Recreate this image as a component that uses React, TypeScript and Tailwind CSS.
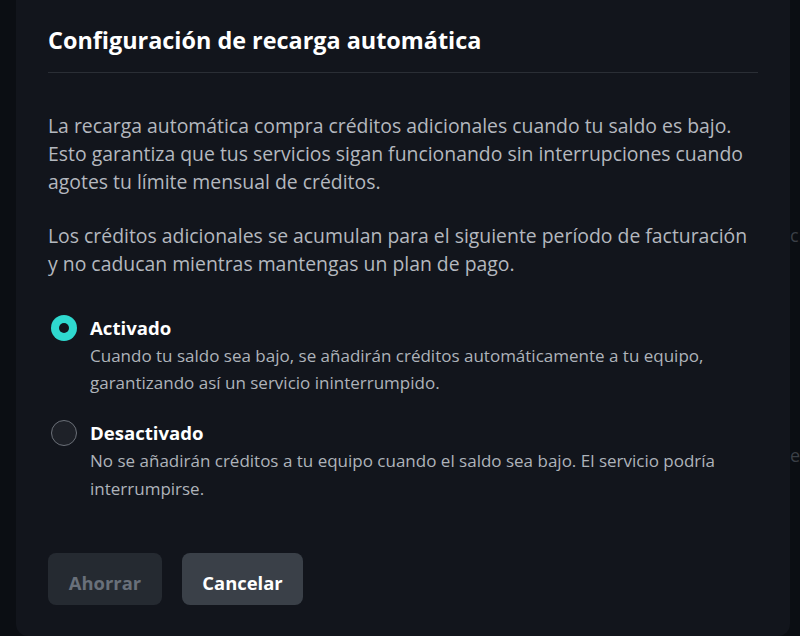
import React from "react";

export default function App() {
  return (
    <div className="relative w-[800px] h-[636px] overflow-hidden bg-[#0b0e13]" style={{ fontFamily: '"Open Sans", "Noto Sans", sans-serif' }}>
      <div className="absolute right-0 top-0 h-full w-[10px] text-[18px] text-[#3a3f46]">
        <div className="absolute top-[222px] left-0">c</div>
        <div className="absolute top-[442px] left-0">e</div>
      </div>
      <div className="ml-4 mr-[10px] h-[636px] rounded-b-xl bg-[#12151c] px-8 pt-[22px]">
        <h2 className="text-[23.4px] font-bold leading-[36px] text-white">Configuración de recarga automática</h2>
        <div className="mt-[14px] h-px w-[710px] bg-[#2a2e35]" />
        <p className="mt-[39px] text-[19.4px] leading-[28px] text-[#b4b8bf]">
          La recarga automática compra créditos adicionales cuando tu saldo es bajo.
          <br />
          Esto garantiza que tus servicios sigan funcionando sin interrupciones cuando
          <br />
          agotes tu límite mensual de créditos.
        </p>
        <p className="mt-[26px] text-[19.4px] leading-[28px] text-[#b4b8bf]">
          Los créditos adicionales se acumulan para el siguiente período de facturación
          <br />
          y no caducan mientras mantengas un plan de pago.
        </p>
        <div className="mt-[36px] flex flex-col gap-[23px]">
          <div className="flex gap-[13px] pl-[3px]">
            <div className="mt-[1px] flex h-[26px] w-[26px] shrink-0 items-center justify-center rounded-full bg-[#2fd9cf]">
              <div className="h-[10px] w-[10px] rounded-full bg-[#12151c]" />
            </div>
            <div>
              <div className="text-[18.6px] font-bold leading-[28px] text-white">Activado</div>
              <div className="text-[17px] leading-[27px] text-[#aeb3ba]">
                Cuando tu saldo sea bajo, se añadirán créditos automáticamente a tu equipo,
                <br />
                garantizando así un servicio ininterrumpido.
              </div>
            </div>
          </div>
          <div className="flex gap-[13px] pl-[3px]">
            <div className="mt-[1px] h-[26px] w-[26px] shrink-0 rounded-full border-[1.5px] border-[#6b7078] bg-[#1e2128]" />
            <div>
              <div className="text-[18.6px] font-bold leading-[28px] text-white">Desactivado</div>
              <div className="text-[17px] leading-[28px] text-[#aeb3ba]">
                No se añadirán créditos a tu equipo cuando el saldo sea bajo. El servicio podría
                <br />
                interrumpirse.
              </div>
            </div>
          </div>
        </div>
        <div className="mt-[50px] flex gap-5">
          <button className="h-[52px] w-[114px] rounded-lg bg-[#252a31] pt-[8px] text-[18.4px] font-bold text-[#69707a]">Ahorrar</button>
          <button className="h-[52px] w-[121px] rounded-lg bg-[#3a4048] pt-[8px] text-[18.4px] font-bold text-white">Cancelar</button>
        </div>
      </div>
    </div>
  );
}
